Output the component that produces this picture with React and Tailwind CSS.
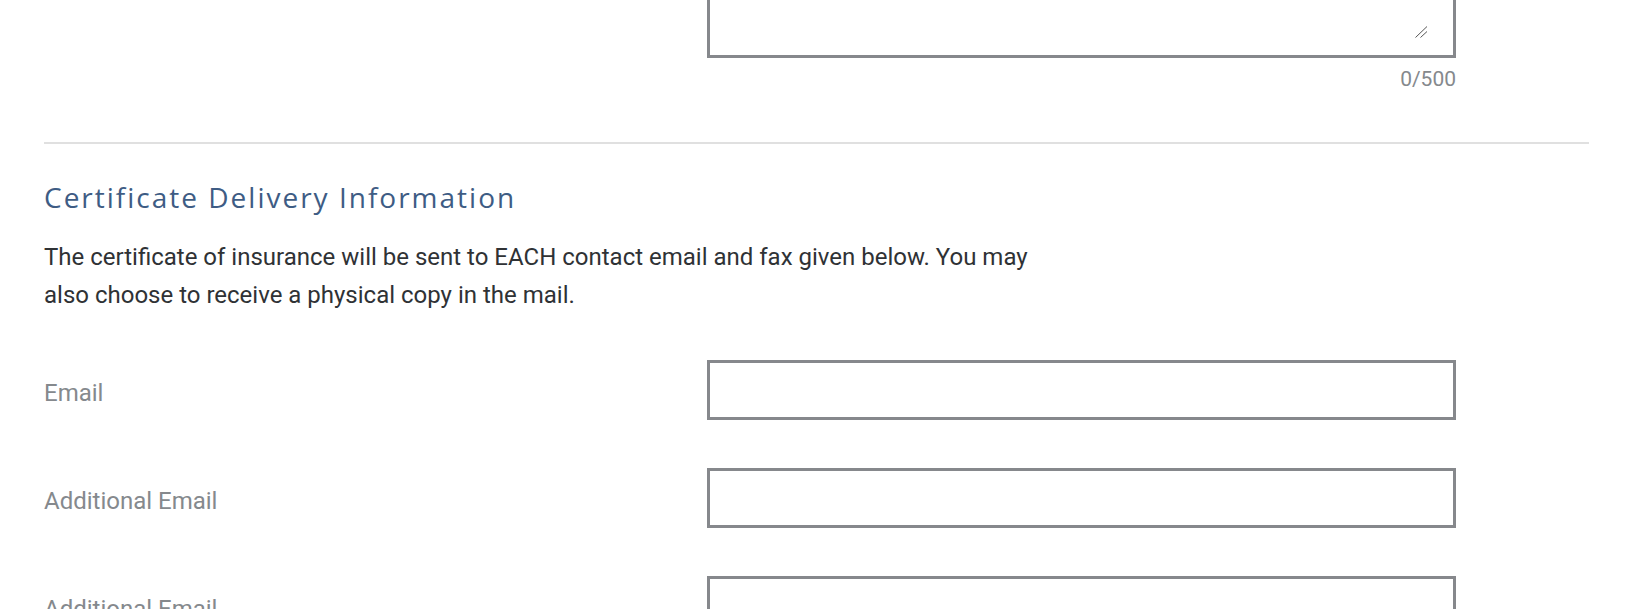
import React from "react";

function Field({ label }) {
  return (
    <div className="flex items-center">
      <label className="w-[663px] shrink-0 mt-[6px] text-[24px] leading-[28px] text-[#85898d]">{label}</label>
      <input
        type="text"
        className="w-[749px] h-[60px] border-[3px] border-[#86888c] bg-white outline-none px-3 text-[20px]"
      />
    </div>
  );
}

export default function App() {
  return (
    <div
      className="min-h-screen bg-white overflow-hidden pl-[44px] pr-[41px]"
      style={{ fontFamily: "Roboto, 'Liberation Sans', sans-serif" }}
    >
      <div className="flex -mt-[62px]">
        <div className="w-[663px] shrink-0" />
        <div className="w-[749px]">
          <div className="relative h-[120px] border-[3px] border-[#86888c] bg-white">
            <svg
              className="absolute right-[25px] bottom-[17px]"
              width="13"
              height="12"
              viewBox="0 0 13 12"
            >
              <line x1="0.5" y1="11.5" x2="12" y2="0.5" stroke="#555" strokeWidth="1" />
              <line x1="5.5" y1="11.5" x2="12" y2="5.5" stroke="#555" strokeWidth="1" />
            </svg>
          </div>
          <div className="mt-[7px] text-right text-[21px] leading-[28px] text-[#85898d]">0/500</div>
        </div>
      </div>

      <div className="mt-[49px] border-t-2 border-[#e0e0e0]" />

      <h2
        className="mt-[35px] text-[28px] leading-[36px] tracking-[2px] text-[#3e5c84] font-normal"
        style={{ fontFamily: "'Open Sans', sans-serif" }}
      >
        Certificate Delivery Information
      </h2>

      <p className="mt-[24px] max-w-[1000px] text-[24px] leading-[37.5px] text-[#2f3235]">
        The certificate of insurance will be sent to EACH contact email and fax given below. You may also choose to
        receive a physical copy in the mail.
      </p>

      <div className="mt-[46px] flex flex-col gap-[48px]">
        <Field label="Email" />
        <Field label="Additional Email" />
        <Field label="Additional Email" />
      </div>
    </div>
  );
}
